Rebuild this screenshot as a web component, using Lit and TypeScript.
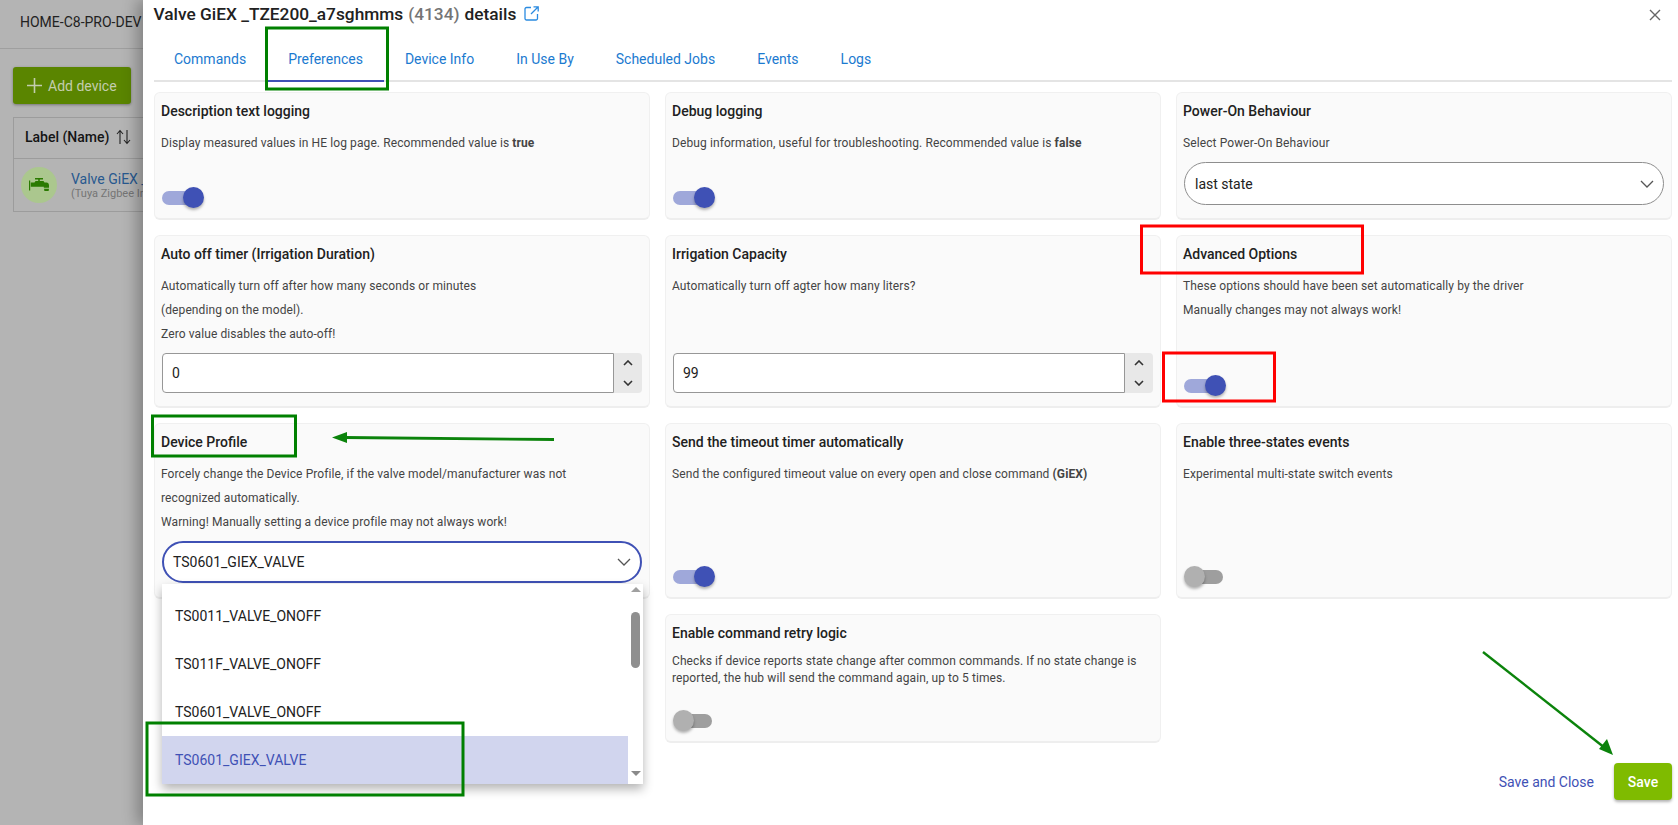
import { LitElement, html, css, svg } from "lit";
import { customElement } from "lit/decorators.js";

const chevron = () => html`<svg class="chev" viewBox="0 0 14 8" width="14" height="8"><path d="M1 1l6 6 6-6" fill="none" stroke="currentColor" stroke-width="1.300"/></svg>`;
const spinChev = (up: boolean) => html`<svg class="chev" viewBox="0 0 10 6" width="10" height="6"><path d=${up ? "M1 5l4-4 4 4" : "M1 1l4 4 4-4"} fill="none" stroke="currentColor" stroke-width="1.600"/></svg>`;
const toggle = (on: boolean) => html`<div class="toggle ${on ? "on" : "off"}"><span class="track"></span><span class="thumb"></span></div>`;

@customElement("app-root")
export class AppRoot extends LitElement {
  static styles = css`
    :host { display: block; position: relative; width: 1678px; height: 825px; overflow: hidden; background: #b4b4b4; font-family: Roboto, "Liberation Sans", sans-serif; color: #1d1d1d; }
    * { box-sizing: border-box; }
    .page-head { height: 49px; padding: 0 0 4px 20px; display: flex; align-items: center; border-bottom: 1px solid #9f9f9f; font-size: 14px; color: #222; white-space: nowrap; }
    .page-body { padding: 18px 0 0 13px; }
    .add { width: 118px; height: 37px; border-radius: 3px; background: #5a8500; color: #c3cdae; display: flex; align-items: center; gap: 6px; padding-left: 14px; font-size: 14px; box-shadow: 0 1px 3px rgba(0,0,0,.35); }
    .table { margin-top: 13px; width: 300px; border: 1px solid #9c9c9c; }
    .th { height: 41px; display: flex; align-items: center; gap: 7px; padding: 0 0 2px 11px; border-bottom: 1px solid #9c9c9c; font-size: 14px; font-weight: 500; color: #141414; }
    .tr { height: 52px; display: flex; align-items: center; gap: 14px; padding-left: 7px; }
    .avatar { width: 36px; height: 36px; border-radius: 50%; background: #abc78e; display: flex; align-items: center; justify-content: center; flex: none; }
    .tr b { display: block; font-weight: 400; font-size: 14px; color: #28598f; line-height: 16px; white-space: nowrap; }
    .tr small { display: block; font-size: 11px; color: #757575; line-height: 13px; white-space: nowrap; }

    .panel { position: absolute; left: 143px; top: 0; width: 1535px; height: 825px; background: #fff; box-shadow: -6px 0 14px rgba(0,0,0,.28); padding: 0 6px 0 11px; display: flex; flex-direction: column; }
    .title { height: 27px; display: flex; align-items: center; font-size: 17.300px; font-weight: 500; color: #212121; white-space: nowrap; margin-left: -.5px; }
    .title em { font-style: normal; color: #757575; margin: 0 5px; }
    .ext { margin-left: 8px; }
    .close { position: absolute; right: 16px; top: 8px; color: #666; }
    .tabs { height: 55px; display: flex; align-items: flex-end; border-bottom: 2px solid #e4e4e4; }
    .tab { height: 41px; padding: 8px 21px 0; font-size: 14px; color: #1b7ad0; margin-bottom: -2px; line-height: 20px; white-space: nowrap; }
    .tab:first-child { margin-left: -1px; }
    .tab.active { border-bottom: 2px solid #3f51b5; }
    .grid { margin-top: 10px; display: grid; grid-template-columns: repeat(3, 496px); grid-template-rows: 128px 173px 176px 129px; gap: 15px; }
    .card { position: relative; background: #fafafa; border: 1px solid #f0f0f0; border-bottom: 2px solid #eeeeee; border-radius: 6px; padding: 6px 7px 0 6px; display: flex; flex-direction: column; }
    .card h3 { margin: 0 0 8px; font-size: 14px; font-weight: 500; line-height: 24px; color: #212121; }
    .card p { margin: 0; font-size: 12px; line-height: 24px; color: #444; letter-spacing: .1px; }
    .card p.tight { line-height: 17.300px; }
    .card p b { font-weight: 700; }
    .ctrl { margin-top: auto; margin-left: 1px; }
    .ctrl.sel { margin-bottom: 13px; position: relative; }
    .ctrl.sel.open { margin-bottom: 14px; }
    .ctrl.num { margin-bottom: 13px; }
    .ctrl.tog { margin-bottom: 10px; }

    .toggle { position: relative; width: 42px; height: 21px; }
    .track { position: absolute; top: 4px; height: 14px; border-radius: 7px; }
    .thumb { position: absolute; top: 0; width: 21px; height: 21px; border-radius: 50%; box-shadow: 0 2px 3px rgba(0,0,0,.3); }
    .on .track { left: 0; width: 34px; background: #9fa8da; }
    .on .thumb { left: 21px; background: #3f51b5; }
    .off .track { left: 6px; width: 33px; background: #9e9e9e; }
    .off .thumb { left: 0; background: #b0b0b0; }

    .select { height: 43px; border: 1px solid #8e8e8e; border-radius: 22px; background: #fff; display: flex; align-items: center; justify-content: space-between; padding: 0 9px 0 10px; font-size: 14px; color: #212121; }
    .select.focus { height: 42px; width: 480px; border: 2px solid #3f51b5; padding: 0 9px; }
    .chev { color: #555; display: block; }
    .number { display: flex; height: 40px; width: 480px; }
    .number .field { flex: 1; background: #fff; border: 1px solid #979797; border-radius: 4px 0 0 4px; display: flex; align-items: center; padding-left: 9px; font-size: 14px; color: #212121; }
    .number .spin { width: 28px; background: #e8e8e8; border-radius: 0 4px 4px 0; display: flex; flex-direction: column; align-items: center; justify-content: space-between; padding: 7px 0; }
    .number .spin .chev { color: #333; }

    .menu { position: absolute; left: 0; top: 43px; width: 481px; height: 200px; background: #fff; box-shadow: 0 5px 10px rgba(0,0,0,.3); z-index: 2; display: flex; }
    .list { flex: 1; padding-top: 8px; }
    .opt { height: 48px; padding-left: 13px; display: flex; align-items: center; font-size: 14px; color: #212121; }
    .opt.sel { background: #d1d5ee; color: #3f51b5; }
    .sb { width: 15px; background: #fff; display: flex; flex-direction: column; align-items: center; justify-content: space-between; padding: 3px 0; }
    .sb i { display: block; width: 9px; height: 56px; background: #8f8f8f; border-radius: 5px; margin-bottom: 47px; margin-top: -37px; }
    .tri-u { width: 0; height: 0; border: 5px solid transparent; border-top: 0; border-bottom: 5px solid #a0a0a0; }
    .tri-d { width: 0; height: 0; border: 5px solid transparent; border-bottom: 0; border-top: 5px solid #8a8a8a; margin-bottom: 5px; }

    .foot { margin-top: 20px; display: flex; justify-content: flex-end; align-items: center; gap: 20px; }
    .link { font-size: 14px; color: #3f51b5; }
    .save { width: 58px; height: 37px; background: #7fbb00; color: #fff; font-size: 14px; font-weight: 500; border-radius: 4px; display: flex; align-items: center; justify-content: center; box-shadow: 0 2px 3px rgba(0,0,0,.3); }

    .marks { position: absolute; left: 0; top: 0; width: 1678px; height: 825px; pointer-events: none; z-index: 5; }
  `;

  private card(title: string, desc: unknown, control: unknown) {
    return html`<section class="card"><h3>${title}</h3>${desc}${control}</section>`;
  }

  private tog(on: boolean) { return html`<div class="ctrl tog">${toggle(on)}</div>`; }
  private num(v: string) {
    return html`<div class="ctrl num"><div class="number"><div class="field">${v}</div><div class="spin">${spinChev(true)}${spinChev(false)}</div></div></div>`;
  }

  render() {
    const tabs = ["Commands", "Preferences", "Device Info", "In Use By", "Scheduled Jobs", "Events", "Logs"];
    const opts = ["TS0011_VALVE_ONOFF", "TS011F_VALVE_ONOFF", "TS0601_VALVE_ONOFF", "TS0601_GIEX_VALVE"];
    return html`
      <div class="page-head">HOME-C8-PRO-DEV</div>
      <div class="page-body">
        <div class="add">
          <svg width="15" height="15" viewBox="0 0 15 15"><path d="M7.500 0v15M0 7.500h15" stroke="#c3cdae" stroke-width="1.600"/></svg>
          Add device
        </div>
        <div class="table">
          <div class="th">Label (Name)
            <svg width="15" height="16" viewBox="0 0 15 16"><path d="M4 15V2M1 5l3-3.500L7 5M11 1v13M8 11l3 3.500L14 11" fill="none" stroke="#222" stroke-width="1.100"/></svg>
          </div>
          <div class="tr">
            <div class="avatar">
              <svg width="20" height="14" viewBox="0 0 20 14"><path fill="#2a7a00" d="M0 2.500h1.200v10H0zM6 0h8v1.400H10.800V3H14.500L15.500 4.500H17.500C19 4.500 20 5.800 20 7.500V9.800H14.800V8.800H1.800V4.500H5.500L6.500 3H9.200V1.400H6zM15 10.800h5l-.4 2.200h-4.200z"/></svg>
            </div>
            <div><b>Valve GiEX _TZE200_a7sghmms</b><small>(Tuya Zigbee Irrigation Valve)</small></div>
          </div>
        </div>
      </div>

      <div class="panel">
        <div class="title">Valve GiEX _TZE200_a7sghmms<em>(4134)</em>details
          <svg class="ext" width="15" height="15" viewBox="0 0 15 15" fill="none" stroke="#2a8ae0" stroke-width="1.300"><path d="M7 1.500H2.500A1.500 1.500 0 0 0 1 3v9.500A1.500 1.500 0 0 0 2.500 14H12a1.500 1.500 0 0 0 1.500-1.500V8"/><path d="M9.500 .8h4.700v4.700M14 1 7 8"/></svg>
        </div>
        <svg class="close" width="14" height="14" viewBox="0 0 14 14"><path d="M2 2l10 10M12 2 2 12" stroke="currentColor" stroke-width="1.400"/></svg>
        <nav class="tabs">${tabs.map((t, i) => html`<div class="tab ${i === 1 ? "active" : ""}">${t}</div>`)}</nav>
        <div class="grid">
          ${this.card("Description text logging", html`<p>Display measured values in HE log page. Recommended value is <b>true</b></p>`, this.tog(true))}
          ${this.card("Debug logging", html`<p>Debug information, useful for troubleshooting. Recommended value is <b>false</b></p>`, this.tog(true))}
          ${this.card("Power-On Behaviour", html`<p>Select Power-On Behaviour</p>`, html`<div class="ctrl sel"><div class="select">last state ${chevron()}</div></div>`)}

          ${this.card("Auto off timer (Irrigation Duration)", html`<p>Automatically turn off after how many seconds or minutes<br>(depending on the model).<br>Zero value disables the auto-off!</p>`, this.num("0"))}
          ${this.card("Irrigation Capacity", html`<p>Automatically turn off agter how many liters?</p>`, this.num("99"))}
          ${this.card("Advanced Options", html`<p>These options should have been set automatically by the driver<br>Manually changes may not always work!</p>`, this.tog(true))}

          ${this.card("Device Profile", html`<p>Forcely change the Device Profile, if the valve model/manufacturer was not<br>recognized automatically.<br>Warning! Manually setting a device profile may not always work!</p>`, html`
            <div class="ctrl sel open">
              <div class="select focus">TS0601_GIEX_VALVE ${chevron()}</div>
              <div class="menu">
                <div class="list">${opts.map((o, i) => html`<div class="opt ${i === 3 ? "sel" : ""}">${o}</div>`)}</div>
                <div class="sb"><span class="tri-u"></span><i></i><span class="tri-d"></span></div>
              </div>
            </div>`)}
          ${this.card("Send the timeout timer automatically", html`<p>Send the configured timeout value on every open and close command <b>(GiEX)</b></p>`, this.tog(true))}
          ${this.card("Enable three-states events", html`<p>Experimental multi-state switch events</p>`, this.tog(false))}

          <div></div>
          ${this.card("Enable command retry logic", html`<p class="tight">Checks if device reports state change after common commands. If no state change is reported, the hub will send the command again, up to 5 times.</p>`, this.tog(false))}
        </div>
        <div class="foot"><span class="link">Save and Close</span><span class="save">Save</span></div>
      </div>

      <svg class="marks" viewBox="0 0 1678 825" fill="none">
        ${svg`
          <rect x="266.500" y="28" width="121" height="61" stroke="#008000" stroke-width="3"/>
          <rect x="152.500" y="416" width="143" height="40" stroke="#008000" stroke-width="3"/>
          <rect x="147" y="723" width="316" height="72" stroke="#008000" stroke-width="3"/>
          <rect x="1141.500" y="226" width="221" height="47" stroke="#ff0000" stroke-width="3"/>
          <rect x="1163.500" y="353" width="111" height="48" stroke="#ff0000" stroke-width="3"/>
          <path d="M554 439.500 345 437.500" stroke="#0b830b" stroke-width="2.800"/>
          <path d="M332 437.500 347 432v11z" fill="#0b830b"/>
          <path d="M1483 652 1605 748" stroke="#0b830b" stroke-width="2.400"/>
          <path d="M1613 755 1599 749 1607 739z" fill="#0b830b"/>
        `}
      </svg>
    `;
  }
}
